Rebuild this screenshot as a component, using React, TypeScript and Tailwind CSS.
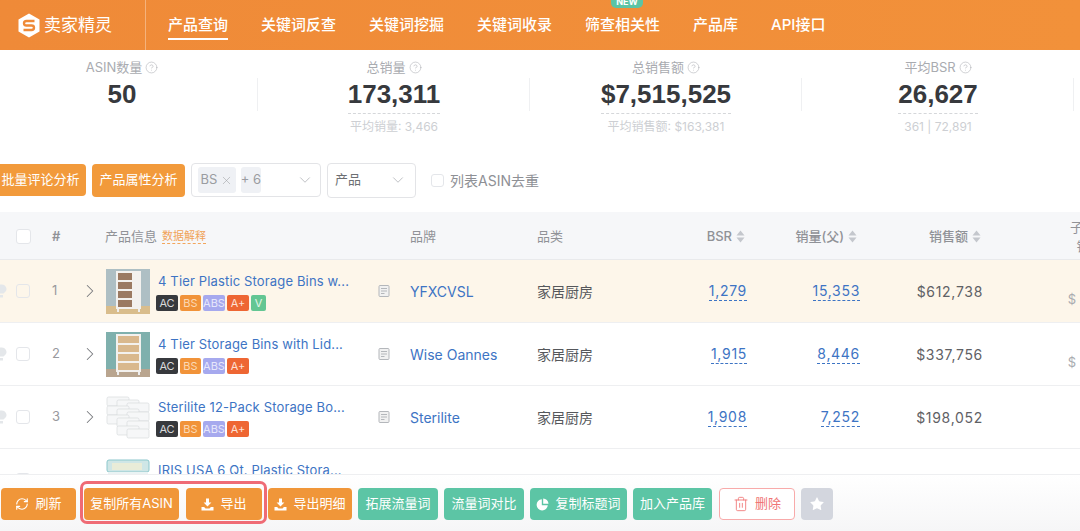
import { ChevronDown, ChevronRight, CircleHelp, RefreshCw, Star, Trash2, X } from "lucide-react";
import type { ReactNode } from "react";

const nav = ["关键词反查", "关键词挖掘", "关键词收录", "筛查相关性", "产品库", "API接口"];

const stats = [
  { label: "ASIN数量", value: "50", sub: null, dashed: false },
  { label: "总销量", value: "173,311", sub: "平均销量: 3,466", dashed: true },
  { label: "总销售额", value: "$7,515,525", sub: "平均销售额: $163,381", dashed: true },
  { label: "平均BSR", value: "26,627", sub: "361 | 72,891", dashed: true },
];

const rows = [
  { n: 1, title: "4 Tier Plastic Storage Bins w...", brand: "YFXCVSL", bsr: "1,279", sales: "15,353", rev: "$612,738", thumb: "wood", badges: 2, sub: true },
  { n: 2, title: "4 Tier Storage Bins with Lid...", brand: "Wise Oannes", bsr: "1,915", sales: "8,446", rev: "$337,756", thumb: "teal", badges: 1, sub: true },
  { n: 3, title: "Sterilite 12-Pack Storage Bo...", brand: "Sterilite", bsr: "1,908", sales: "7,252", rev: "$198,052", thumb: "stack", badges: 1, sub: false },
  // the footer covers everything below the title in this row
  { n: 4, title: "IRIS USA 6 Qt. Plastic Stora...", brand: "", bsr: "", sales: "", rev: "", thumb: "iris", badges: 0, sub: false },
];

function Sort() {
  return (
    <svg width="9" height="13" viewBox="0 0 9 13" className="ml-1 shrink-0">
      <path d="M4.500 0.500 8.500 5.500H0.500Z" fill="#c4c7cd" />
      <path d="M4.500 12.500 8.500 7.500H0.500Z" fill="#c4c7cd" />
    </svg>
  );
}

function Tray() {
  return (
    <svg width="13" height="13" viewBox="0 0 13 13" fill="#fff" className="shrink-0">
      <path d="M5 0.500h3v4h2.400L6.500 8.500 2.600 4.500H5Z" />
      <path d="M0.500 9h2.600l1.400 1.500h4L9.900 9h2.600v3.500H0.500Z" />
    </svg>
  );
}

function Pie() {
  return (
    <svg width="13" height="13" viewBox="0 0 13 13" fill="#fff" className="shrink-0">
      <path d="M5.800 1.200A5.600 5.600 0 1 0 11.800 7.200H5.800Z" />
      <path d="M7.200 0.500V5.800H12.500A5.400 5.400 0 0 0 7.200 0.500Z" />
    </svg>
  );
}

function DocIcon() {
  return (
    <svg width="12" height="12" viewBox="0 0 12 12" fill="none" stroke="#b4b7bb" strokeWidth="1">
      <rect x="1" y="0.500" width="10" height="11" rx="1" fill="#f1f1f1" />
      <path d="M3 3.500h6M3 6h6M3 8.500h3.500" />
    </svg>
  );
}

function Thumb({ kind }: { kind: string }) {
  if (kind === "stack") {
    const bins = [
      [1, 2], [11, 5], [21, 8], [1, 11], [11, 14], [21, 17], [1, 20], [11, 23], [21, 26], [11, 31], [21, 34],
    ];
    return (
      <svg width="44" height="45" viewBox="0 0 44 45" className="shrink-0">
        {bins.map(([x, y]) => (
          <rect key={`${x}-${y}`} x={x} y={y} width="22" height="9" rx="1.500" fill="#f6f7f8" stroke="#d9dbdd" strokeWidth="0.700" />
        ))}
      </svg>
    );
  }
  if (kind === "iris") {
    return (
      <svg width="44" height="45" viewBox="0 0 44 45" className="shrink-0">
        <rect x="1" y="2" width="42" height="12" rx="2" fill="#cfe6e6" stroke="#8cc7cc" />
        <rect x="6" y="5" width="30" height="7" fill="#e9ecd8" />
        <rect x="2" y="14" width="40" height="26" fill="#eaf3f4" />
      </svg>
    );
  }
  const teal = kind === "teal";
  return (
    <svg width="44" height="45" viewBox="0 0 44 45" className="shrink-0">
      <rect width="44" height="45" fill={teal ? "#7fb0ad" : "#aebfc4"} />
      <rect y="37" width="44" height="8" fill={teal ? "#b9a58f" : "#d9bd8c"} />
      <rect x="10" y="2" width="25" height="38" fill="#f3f1ee" />
      {[4, 13, 22, 31].map((y) => (
        <rect key={y} x="12" y={y} width={teal ? 21 : 14} height="7" fill={teal ? "#d9b88d" : "#9b7a62"} />
      ))}
      <rect x="11" y="40" width="2" height="3" fill="#eee" />
      <rect x="32" y="40" width="2" height="3" fill="#eee" />
    </svg>
  );
}

function Badge({ children, cls }: { children: ReactNode; cls: string }) {
  return (
    <span className={`flex h-[16px] items-center justify-center rounded-[2px] text-[11px] leading-none ${cls}`}>
      {children}
    </span>
  );
}

function Btn({ children, cls }: { children: ReactNode; cls: string }) {
  return (
    <button className={`flex h-[32px] shrink-0 items-center justify-center gap-[6px] rounded-[4px] text-[13px] text-white ${cls}`}>
      {children}
    </button>
  );
}

function Check({ cls }: { cls: string }) {
  return <span className={`block rounded-[3px] border border-[#e4e6ea] ${cls}`} />;
}

export default function App() {
  return (
    <div
      className="flex h-[531px] w-[1080px] flex-col overflow-hidden bg-white text-[#5f6165]"
      style={{ fontFamily: 'Inter, "Noto Sans CJK SC", sans-serif' }}
    >
      {/* Header */}
      <header className="flex h-[50px] shrink-0 bg-gradient-to-r from-[#ef8a38] to-[#f2913a] text-white">
        <div className="flex w-[146px] shrink-0 items-center border-r border-[#f5b27c] pl-[18px]">
          <svg width="22" height="25" viewBox="0 0 22 25">
            <path d="M11 0.500 21.500 6.500V18.500L11 24.500 0.500 18.500V6.500Z" fill="#fff" />
            <path d="M16.500 8H8.500Q6 8 6 10.300T8.500 12.500H13.500Q16 12.500 16 14.700T13.500 17H5.500" fill="none" stroke="#ef8a38" strokeWidth="2.400" />
          </svg>
          <span className="ml-[4px] text-[17px] leading-none">卖家精灵</span>
        </div>
        <nav className="flex gap-[33px] pl-[22px] text-[15px] font-medium">
          <div className="relative flex h-[50px] items-center">
            产品查询
            <span className="absolute bottom-[10px] left-0 right-0 h-[2px] bg-white" />
          </div>
          {nav.map((item) => (
            <div key={item} className="relative flex h-[50px] items-center">
              {item}
              {item === "筛查相关性" && (
                <span className="absolute -top-[5px] left-[26px] flex h-[13px] w-[32px] items-center justify-center rounded-[5px] bg-[#5cc4a5] text-[9px] font-bold">
                  NEW
                </span>
              )}
            </div>
          ))}
        </nav>
      </header>

      {/* Stats */}
      <section className="-ml-[14px] flex h-[91px] shrink-0 pt-[10px]">
        {stats.map((s) => (
          <div key={s.label} className="flex w-[272px] shrink-0 flex-col items-center">
            <div className="flex h-[15px] items-center gap-[3px] text-[13px] text-[#a9abb0]">
              {s.label}
              <CircleHelp size={13} strokeWidth={1} />
            </div>
            <div className="relative mt-[3px] flex w-full justify-center">
              <span
                className={`text-[26px] font-bold leading-[32px] text-[#37393d] ${s.dashed ? "border-b border-dashed border-[#d5d7da] pb-[3px]" : ""}`}
                style={{ fontFamily: '"Liberation Sans", sans-serif' }}
              >
                {s.value}
              </span>
              <span className="absolute right-0 top-0 h-[33px] w-px bg-[#eff0f2]" />
            </div>
            {s.sub && <div className="mt-[5px] text-[12px] leading-[15px] text-[#cdcfd3]">{s.sub}</div>}
          </div>
        ))}
      </section>

      {/* Toolbar */}
      <section className="-ml-[5px] mt-[22px] flex h-[34px] shrink-0 items-center">
        <Btn cls="w-[91px] bg-[#f29a3b]">批量评论分析</Btn>
        <Btn cls="ml-[6px] h-[33px] w-[93px] bg-[#f29a3b]">产品属性分析</Btn>
        <div className="ml-[6px] flex h-[34px] w-[130px] items-center rounded-[4px] border border-[#e3e4e7] pl-[6px] text-[13px] text-[#9a9ca1]">
          <span className="flex h-[26px] w-[38px] items-center justify-center gap-[3px] rounded-[3px] bg-[#eff1f5]">
            BS
            <X size={13} strokeWidth={1} />
          </span>
          <span className="ml-[5px] flex h-[26px] w-[20px] items-center justify-center rounded-[3px] bg-[#eff1f5] whitespace-nowrap">+ 6</span>
          <ChevronDown size={18} strokeWidth={1} className="ml-[35px] text-[#a9abb0]" />
        </div>
        <div className="ml-[6px] flex h-[35px] w-[89px] items-center rounded-[4px] border border-[#e3e4e7] pl-[7px] text-[13px] text-[#6d6f73]">
          产品
          <ChevronDown size={18} strokeWidth={1} className="ml-[28px] text-[#a9abb0]" />
        </div>
        <Check cls="ml-[15px] h-[13px] w-[13px]" />
        <span className="ml-[6px] text-[14px] text-[#8e9095]">列表ASIN去重</span>
      </section>

      {/* Table */}
      <section className="mt-[15px] min-h-0 flex-1 overflow-hidden">
        <div className="flex h-[48px] items-center border-b border-[#e9eaec] bg-[#f6f7f9] pl-[16px] pt-[2px] text-[13px] text-[#909297]">
          <span className="w-[36px] shrink-0">
            <Check cls="h-[15px] w-[15px] bg-white" />
          </span>
          <span className="w-[53px] shrink-0 font-semibold">#</span>
          <span className="flex w-[305px] shrink-0 items-center gap-[5px]">
            产品信息
            <span className="border-b border-dashed border-[#f3a65c] text-[11px] leading-[13px] text-[#f0a35a]">数据解释</span>
          </span>
          <span className="w-[127px] shrink-0">品牌</span>
          <span className="w-[109px] shrink-0">品类</span>
          <span className="flex w-[99px] shrink-0 items-center justify-end font-medium">
            BSR
            <Sort />
          </span>
          <span className="flex w-[112px] shrink-0 items-center justify-end font-medium">
            销量(父)
            <Sort />
          </span>
          <span className="flex w-[124px] shrink-0 items-center justify-end font-medium">
            销售额
            <Sort />
          </span>
          <span className="w-[230px] shrink-0 text-center leading-[19px]">
            子体销量
            <br />
            销售额
          </span>
        </div>

        {rows.map((r) => (
          <div
            key={r.n}
            className={`relative flex h-[63px] items-center border-b border-[#eeeff1] pl-[16px] ${r.n === 1 ? "bg-[#fdf6ea]" : "bg-white"}`}
          >
            {r.rev && (
              <svg width="8" height="14" viewBox="0 0 8 14" className="absolute left-0 top-[24px]">
                <path d="M0 0.500h2a4.500 4.500 0 0 1 4 6.500L3.500 9.500H0ZM0 11h3v2.500H0Z" fill="#e4e7ea" />
              </svg>
            )}
            <span className="w-[36px] shrink-0">
              <Check cls="h-[14px] w-[14px]" />
            </span>
            <span className="w-[34px] shrink-0 text-[13px] text-[#98999d]">{r.n}</span>
            <span className="w-[20px] shrink-0">
              <ChevronRight size={22} strokeWidth={1.100} className="-ml-[7px] text-[#77797d]" />
            </span>
            <div className="flex w-[272px] shrink-0 items-center">
              <Thumb kind={r.thumb} />
              <div className="ml-[6px] flex flex-col gap-[4px]">
                <span className="pl-[2px] text-[13px] leading-[20px] tracking-[0.15px] whitespace-nowrap text-[#3d74c4]">{r.title}</span>
                <div className="flex h-[16px] gap-[2px]">
                  {r.badges > 0 && (
                    <>
                      <Badge cls="w-[22px] bg-[#37393d] text-[#d9dadb]">AC</Badge>
                      <Badge cls="w-[21px] bg-[#f19339] text-[#fbd9b5]">BS</Badge>
                      <Badge cls="w-[22px] bg-[#a6a9ee] text-[#e6e7fb]">ABS</Badge>
                      <Badge cls="w-[22px] bg-[#ee6633] text-[#fde0d3]">A+</Badge>
                    </>
                  )}
                  {r.badges > 1 && <Badge cls="w-[15px] bg-[#63c693] text-[#e3f6ea]">V</Badge>}
                </div>
              </div>
            </div>
            <span className="w-[32px] shrink-0">{r.rev && <DocIcon />}</span>
            <span className="w-[127px] shrink-0 text-[14px] text-[#3d74c4]">{r.brand}</span>
            <span className="w-[109px] shrink-0 text-[14px] text-[#55575b]">家居厨房</span>
            <span className="flex w-[101px] shrink-0 justify-end">
              {r.bsr && <span className="border-b border-dashed border-[#3d74c4] text-[14px] leading-[18px] tracking-[0.7px] text-[#3d74c4]">{r.bsr}</span>}
            </span>
            <span className="flex w-[113px] shrink-0 justify-end">
              {r.sales && <span className="border-b border-dashed border-[#3d74c4] text-[14px] leading-[18px] tracking-[0.7px] text-[#3d74c4]">{r.sales}</span>}
            </span>
            <span className="w-[123px] shrink-0 text-right text-[14px] tracking-[0.7px] text-[#5f6165]">{r.rev}</span>
            {r.sub && <span className="w-[93px] shrink-0 pt-[18px] text-right text-[13px] text-[#a9abb0]">$</span>}
          </div>
        ))}
      </section>

      {/* Footer */}
      <footer className="flex h-[57px] shrink-0 items-start gap-[6px] border-t border-[#eeeff1] bg-gradient-to-b from-white to-[#f6f6f7] pl-[1px] pt-[13px]">
        <Btn cls="w-[75px] bg-[#f09639]">
          <RefreshCw size={14} strokeWidth={2} />
          刷新
        </Btn>
        <div className="-ml-[2px] -mt-[7px] flex h-[43px] w-[187px] shrink-0 items-end justify-between rounded-[7px] border-[3px] border-[#ef6b75] pb-[1px] pl-[1px] pr-[2px]">
          <Btn cls="w-[95px] bg-[#f09639]">复制所有ASIN</Btn>
          <Btn cls="w-[76px] bg-[#f09639]">
            <Tray />
            导出
          </Btn>
        </div>
        <Btn cls="-ml-[5px] w-[84px] bg-[#f09639]">
          <Tray />
          导出明细
        </Btn>
        <Btn cls="w-[80px] bg-[#5cc5a5]">拓展流量词</Btn>
        <Btn cls="w-[80px] bg-[#5cc5a5]">流量词对比</Btn>
        <Btn cls="w-[97px] bg-[#5cc5a5]">
          <Pie />
          复制标题词
        </Btn>
        <Btn cls="w-[79px] bg-[#5cc5a5]">加入产品库</Btn>
        <Btn cls="ml-[1px] w-[76px] border border-[#f8aaaa] bg-white !text-[#f07575]">
          <Trash2 size={16} strokeWidth={1.300} />
          删除
        </Btn>
        <Btn cls="w-[32px] bg-[#d3d6de]">
          <Star size={16} fill="#fff" strokeWidth={0} />
        </Btn>
      </footer>
    </div>
  );
}
